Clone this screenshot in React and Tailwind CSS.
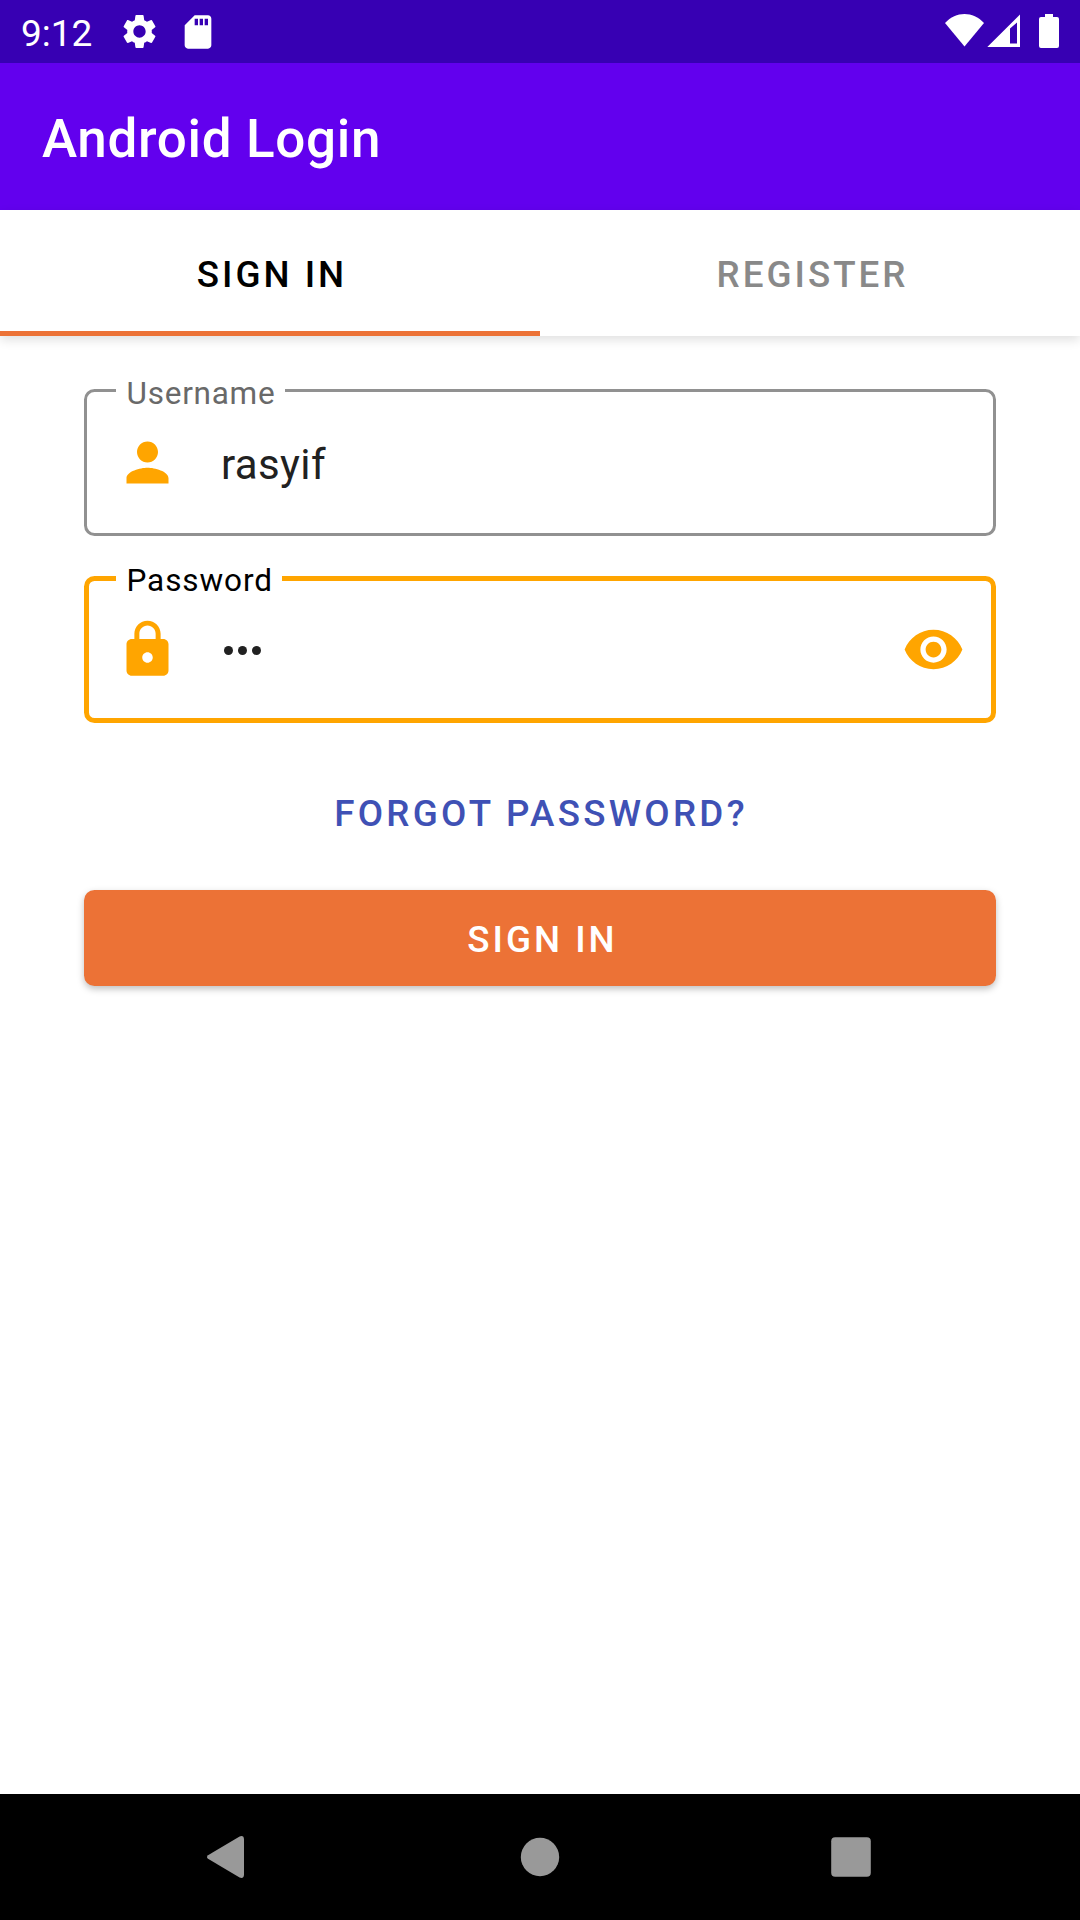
import { MdSettings, MdSdCard, MdPerson, MdLock, MdVisibility } from "react-icons/md";

function StatusBar() {
  return (
    <div className="flex h-[63px] items-start justify-between bg-[#3700b3] text-white">
      <div className="flex pl-[21px]">
        <span className="w-[98px] pt-[12px] text-[37px] leading-[43px]">9:12</span>
        <MdSettings className="mt-[11px] size-[41px]" />
        <MdSdCard className="mt-[11.5px] ml-[18px] size-[40px]" />
      </div>
      <svg className="h-[63px] w-[140px]" viewBox="940 0 140 63" fill="currentColor">
        <path d="M945 23C956 11 973 11 984 23L964.5 46.5Z" />
        <path fillRule="evenodd" d="M987.3 47L1020 14.5V47ZM1010 28.5V43.5H1017V22.5Z" />
        <path d="M1045 14h8v3h4a2 2 0 0 1 2 2v27a2 2 0 0 1-2 2h-16a2 2 0 0 1-2-2V19a2 2 0 0 1 2-2h4z" />
      </svg>
    </div>
  );
}

function Tabs() {
  return (
    <div className="flex h-[126px] bg-white text-[36.75px] font-medium leading-[43px] tracking-[3px] shadow-[0_4px_10px_rgba(0,0,0,0.12)]">
      <div className="flex h-full w-[540px] justify-center border-b-[5px] border-[#ec7236] pt-[43px] pl-[4px] text-black">
        SIGN IN
      </div>
      <div className="flex h-full w-[540px] justify-center pt-[43px] pl-[5px] text-[#898989]">REGISTER</div>
    </div>
  );
}

function Field({ label, icon: Icon, focused, children }) {
  return (
    <div
      className={
        focused
          ? "relative mt-[40px] flex h-[147px] items-center rounded-[10.5px] border-[5px] border-[#ffa500] pl-[27px] pr-[26px]"
          : "relative mt-[53px] flex h-[147px] items-center rounded-[10.5px] border-[3px] border-[#919191] pl-[29px] pr-[28px]"
      }
    >
      <span
        className={
          focused
            ? "absolute -top-[19px] left-[27px] w-[166px] bg-white pl-[10.5px] text-[31.5px] leading-[37px] tracking-[0.9px] text-black"
            : "absolute -top-[17px] left-[29px] w-[169px] bg-white pl-[10.5px] text-[31.5px] leading-[37px] tracking-[0.75px] text-[#696969]"
        }
      >
        {label}
      </span>
      <Icon className="size-[63px] text-[#ffa500]" />
      {children}
    </div>
  );
}

function NavBar() {
  return (
    <svg className="h-[126px] w-full bg-black" viewBox="0 1794 1080 126" fill="#999999">
      <path d="M208 1855.2L239.6 1836.4Q244 1835 244 1839.5V1874.5Q244 1879 239.6 1877.6L208 1858.8Q206 1857 208 1855.2Z" />
      <circle cx="540" cy="1857" r="19.2" />
      <rect x="831.2" y="1837.2" width="39.6" height="39.6" rx="4" />
    </svg>
  );
}

export default function App() {
  return (
    <div className="flex h-[1920px] w-[1080px] flex-col overflow-hidden bg-white font-[Roboto,sans-serif]">
      <StatusBar />
      <header className="h-[147px] bg-[#6200ee] pt-[45px] pl-[42px] text-[53px] font-medium leading-[62px] tracking-[0.66px] text-white">
        Android Login
      </header>
      <Tabs />
      <main className="flex grow flex-col px-[84px]">
        <Field label="Username" icon={MdPerson}>
          <span className="mt-[4px] ml-[42px] text-[42px] leading-[49px] tracking-[0.39px] text-[#212121]">rasyif</span>
        </Field>
        <Field label="Password" icon={MdLock} focused>
          <span className="mt-[2px] ml-[45px] flex grow gap-[5.5px]">
            <i className="size-[8.6px] rounded-full bg-[#212121]" />
            <i className="size-[8.6px] rounded-full bg-[#212121]" />
            <i className="size-[8.6px] rounded-full bg-[#212121]" />
          </span>
          <MdVisibility className="size-[63px] text-[#ffa500]" />
        </Field>
        <a className="mt-[69px] self-center pl-[2px] text-[36.75px] font-medium leading-[43px] tracking-[3.28px] text-[#3f51b5]">
          FORGOT PASSWORD?
        </a>
        <button className="mt-[55px] h-[96px] rounded-[10.5px] bg-[#ec7236] pt-[2px] pl-[5px] text-[36.75px] font-medium leading-[43px] tracking-[3px] text-white shadow-[0_3px_7px_rgba(0,0,0,0.25)]">
          SIGN IN
        </button>
      </main>
      <NavBar />
    </div>
  );
}
